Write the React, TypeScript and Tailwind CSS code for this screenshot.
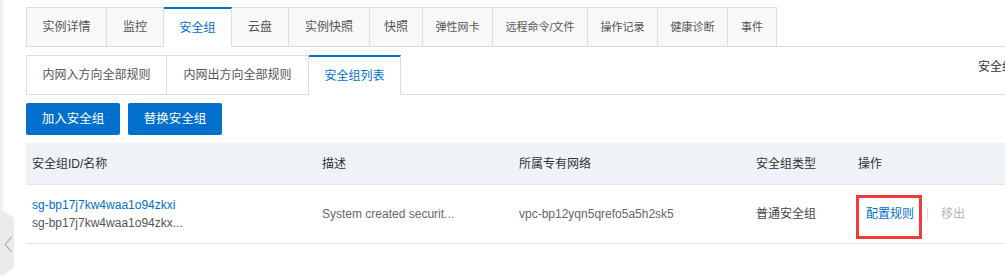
import React from "react";

const mainTabs: { label: string; w: string; fs: string; active?: boolean }[] = [
  { label: "实例详情", w: "w-[81px]", fs: "text-[12px]" },
  { label: "监控", w: "w-[57px]", fs: "text-[12px]" },
  { label: "安全组", w: "w-[68px]", fs: "text-[12px]", active: true },
  { label: "云盘", w: "w-[57px]", fs: "text-[12px]" },
  { label: "实例快照", w: "w-[81px]", fs: "text-[12px]" },
  { label: "快照", w: "w-[53px]", fs: "text-[12px]" },
  { label: "弹性网卡", w: "w-[70px]", fs: "text-[11px]" },
  { label: "远程命令/文件", w: "w-[95px]", fs: "text-[11px]" },
  { label: "操作记录", w: "w-[70px]", fs: "text-[11px]" },
  { label: "健康诊断", w: "w-[70px]", fs: "text-[11px]" },
  { label: "事件", w: "w-[49px]", fs: "text-[11px]" },
];

const subTabs: { label: string; w: string; active?: boolean }[] = [
  { label: "内网入方向全部规则", w: "w-[141px]" },
  { label: "内网出方向全部规则", w: "w-[142px]" },
  { label: "安全组列表", w: "w-[92px]", active: true },
];

export default function App() {
  return (
    <div className="relative w-[1005px] h-[275px] overflow-hidden bg-white font-['Liberation_Sans','Noto_Sans_CJK_SC',sans-serif] text-[12px] text-[#333]">
      {/* left strip */}
      <div className="absolute left-0 top-0 h-full w-[3px] bg-[#f2f2f2]" />
      {/* collapse handle */}
      <svg className="absolute left-0 top-[211px]" width="15" height="66" viewBox="0 0 15 66">
        <polygon points="0,0 3,0 14,7 14,57 3,64 0,64" fill="#ebebeb" />
        <path d="M11.5 26 L5 33.5 L11.5 41" fill="none" stroke="#b3b3b3" strokeWidth="1.2" />
      </svg>

      <div className="pl-[26px] pt-[7px]">
        {/* main tabs */}
        <div className="flex h-[40px]">
          {mainTabs.map((t, i) => (
            <div
              key={t.label}
              className={
                "flex shrink-0 items-center justify-center border-r border-[#dddddd] " +
                (i === 0 ? "border-l " : "") +
                t.w +
                " " +
                t.fs +
                " " +
                (t.active
                  ? "bg-white text-[#0070cc] border-t-[2px] border-t-[#0070cc] border-b border-b-white"
                  : "bg-[#f8f8f8] text-[#555] border-t border-b")
              }
            >
              {t.label}
            </div>
          ))}
          <div className="flex-1 border-b border-[#dddddd]" />
        </div>

        {/* sub tabs */}
        <div className="mt-[8px] flex h-[40px]">
          {subTabs.map((t, i) => (
            <div
              key={t.label}
              className={
                "flex shrink-0 items-center justify-center border-r border-[#dddddd] " +
                (i === 0 ? "border-l " : "") +
                t.w +
                " " +
                (t.active
                  ? "bg-white text-[#0070cc] border-t-[2px] border-t-[#0070cc] border-b border-b-white"
                  : "bg-white text-[#555] border-t border-b")
              }
            >
              {t.label}
            </div>
          ))}
          <div className="relative -mt-[9px] flex flex-1 items-start justify-end overflow-hidden border-b border-[#dddddd] pt-[12px]">
            <span className="absolute left-[577px] top-[12px] whitespace-nowrap text-[#333]">安全组内实例列表</span>
          </div>
        </div>

        {/* buttons */}
        <div className="mt-[8px] flex gap-[8px]">
          <button className="h-[32px] w-[94px] rounded-[2px] bg-[#0070cc] text-[12.5px] text-white">加入安全组</button>
          <button className="h-[32px] w-[94px] rounded-[2px] bg-[#0070cc] text-[12.5px] text-white">替换安全组</button>
        </div>

        {/* table */}
        <div className="mt-[8px]">
          <div className="flex h-[42px] items-center border-b border-[#e3e6eb] bg-[#eff2f6] text-[#333]">
            <div className="w-[290px] pl-[6px]">安全组ID/名称</div>
            <div className="w-[197px] pl-[6px]">描述</div>
            <div className="w-[237px] pl-[6px]">所属专有网络</div>
            <div className="w-[102px] pl-[6px]">安全组类型</div>
            <div className="flex-1 pl-[6px]">操作</div>
          </div>
          <div className="flex h-[59px] items-center border-b border-[#e3e3e3]">
            <div className="w-[290px] pl-[6px] leading-[18px]">
              <div className="text-[#0070cc]">sg-bp17j7kw4waa1o94zkxi</div>
              <div className="text-[#555]">sg-bp17j7kw4waa1o94zkx...</div>
            </div>
            <div className="w-[197px] pl-[6px] text-[#666]">System created securit...</div>
            <div className="w-[237px] pl-[6px] text-[#666]">vpc-bp12yqn5qrefo5a5h2sk5</div>
            <div className="w-[102px] pl-[6px] text-[#444]">普通安全组</div>
            <div className="relative flex flex-1 items-center pl-[14px]">
              <span className="text-[#0070cc]">配置规则</span>
              <span className="mx-[13px] h-[12px] w-[1px] bg-[#d9d9d9]" />
              <span className="text-[#b5b5b5]">移出</span>
              <div className="absolute left-[4px] top-[-10px] h-[44px] w-[66px] border-[3px] border-[#f23a3a]" />
            </div>
          </div>
        </div>
      </div>
    </div>
  );
}
